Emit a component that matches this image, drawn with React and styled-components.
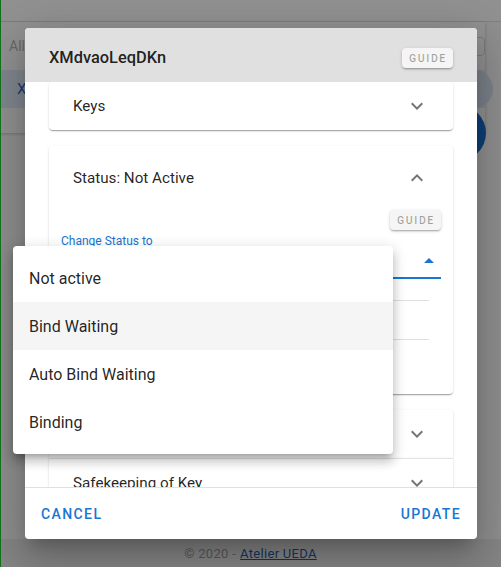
import React from 'react';
import styled, { createGlobalStyle } from 'styled-components';

const GlobalStyle = createGlobalStyle`
  html, body { margin: 0; padding: 0; }
  body {
    width: 501px;
    height: 567px;
    overflow: hidden;
    font-family: Roboto, "Liberation Sans", Arial, sans-serif;
    -webkit-font-smoothing: antialiased;
  }
  *, *::before, *::after { box-sizing: border-box; }
`;

const Screen = styled.div`
  position: relative;
  width: 501px;
  height: 567px;
  overflow: hidden;
  background: #fbfbfb;
  display: flex;
  flex-direction: column;
  &::after {
    content: '';
    position: absolute;
    left: 0;
    top: 0;
    bottom: 0;
    width: 1px;
    background: #13701a;
    z-index: 10;
  }
`;

/* ---------- page behind the dialog ---------- */
const AppBar = styled.header`
  height: 22px;
  flex-shrink: 0;
  background: #ffffff;
  border-bottom: 1px solid #e2e2e2;
`;

const PagePanel = styled.section`
  width: 485px;
  background: #ffffff;
  box-shadow: 0 1px 3px rgba(0, 0, 0, 0.2);
  padding-bottom: 25px;
`;

const FilterRow = styled.div`
  height: 48px;
  display: flex;
  align-items: center;
  justify-content: space-between;
  padding-left: 9px;
  font-size: 14px;
  color: #b9b9b9;
`;

const FilterBox = styled.div`
  width: 44px;
  height: 19px;
  border: 1px solid #d6d6d6;
  border-radius: 4px;
`;

const ListRow = styled.div`
  height: 38px;
  display: flex;
  align-items: center;
  justify-content: space-between;
  padding-left: 17px;
  background: #e3edf9;
  color: #1e6fcf;
  font-size: 15px;
`;

const RowAvatar = styled.div`
  width: 38px;
  height: 38px;
  margin-right: -8px;
  border-radius: 50%;
  background: #d9e5f4;
`;

const Fab = styled.div`
  position: absolute;
  left: 430px;
  top: 105px;
  width: 56px;
  height: 56px;
  border-radius: 50%;
  background: #1a6fd0;
`;

const PageFooter = styled.footer`
  margin-top: auto;
  height: 28px;
  display: flex;
  align-items: center;
  justify-content: center;
  font-size: 13px;
  color: #9c9c9c;
  letter-spacing: 0.3px;
  background: #ececec;
  & a {
    color: #1f5fa8;
    margin-left: 4px;
    text-decoration: underline;
  }
`;

const Backdrop = styled.div`
  position: absolute;
  inset: 0;
  background: rgba(0, 0, 0, 0.43);
`;

/* ---------- dialog ---------- */
const Dialog = styled.div`
  position: absolute;
  left: 25px;
  top: 28px;
  width: 452px;
  height: 511px;
  background: #ffffff;
  border-radius: 4px;
  overflow: hidden;
  display: flex;
  flex-direction: column;
  box-shadow: 0px 11px 15px -7px rgba(0, 0, 0, 0.2),
    0px 24px 38px 3px rgba(0, 0, 0, 0.14),
    0px 9px 46px 8px rgba(0, 0, 0, 0.12);
`;

const DialogHeader = styled.div`
  height: 54px;
  flex-shrink: 0;
  background: #e0e0e0;
  padding: 20px 24px 14px 24px;
  display: flex;
  align-items: center;
  justify-content: space-between;
`;

const Title = styled.h2`
  margin: 0;
  font-size: 16.4px;
  line-height: 20px;
  font-weight: 500;
  color: rgba(0, 0, 0, 0.87);
`;

const GuideButton = styled.button`
  width: 51px;
  height: 20px;
  padding: 0 0 0 1px;
  border: none;
  border-radius: 4px;
  background: #f5f5f5;
  color: rgba(0, 0, 0, 0.34);
  font-family: inherit;
  font-size: 10.5px;
  font-weight: 500;
  letter-spacing: 1.6px;
  box-shadow: 0px 2px 2px -1px rgba(0, 0, 0, 0.2),
    0px 1px 2px 0px rgba(0, 0, 0, 0.14),
    0px 1px 4px 0px rgba(0, 0, 0, 0.1);
`;

const DialogBody = styled.div`
  flex: 1;
  min-height: 0;
  overflow: hidden;
  padding: 0 24px;
  display: flex;
  flex-direction: column;
`;

const Card = styled.div`
  flex-shrink: 0;
  background: #ffffff;
  border-radius: ${(p) => (p.$joinTop ? '0' : '4px')} ${(p) => (p.$joinTop ? '0' : '4px')}
    ${(p) => (p.$joinBottom ? '0' : '4px')} ${(p) => (p.$joinBottom ? '0' : '4px')};
  margin-bottom: ${(p) => (p.$joinBottom ? '0' : '16px')};
  border-top: ${(p) => (p.$joinTop ? '1px solid #e3e3e3' : 'none')};
  box-shadow: 0px 2px 1px -1px rgba(0, 0, 0, 0.2),
    0px 1px 1px 0px rgba(0, 0, 0, 0.14),
    0px 1px 3px 0px rgba(0, 0, 0, 0.12);
`;

const Summary = styled.div`
  height: ${(p) => (p.$expanded ? '64px' : '48px')};
  padding: 0 24px;
  display: flex;
  align-items: center;
  justify-content: space-between;
  font-size: 15.2px;
  color: rgba(0, 0, 0, 0.87);
`;

const IconSvg = styled.svg`
  width: 24px;
  height: 24px;
  flex-shrink: 0;
  fill: ${(p) => p.$color || 'rgba(0,0,0,0.54)'};
`;

const Details = styled.div`
  padding: 0 12px 54px 12px;
  display: flex;
  flex-direction: column;
`;

const GuideRow = styled.div`
  display: flex;
  justify-content: flex-end;
`;

const Field = styled.div`
  margin-top: 4px;
  display: flex;
  flex-direction: column;
`;

const FieldLabel = styled.label`
  font-size: 12px;
  line-height: 14px;
  color: #1976d2;
`;

const SelectInput = styled.div`
  height: 31px;
  display: flex;
  align-items: center;
  justify-content: flex-end;
  padding-bottom: 3px;
  border-bottom: 2px solid #1976d2;
`;

const BlankRow = styled.div`
  height: ${(p) => p.$h}px;
  margin-right: 12px;
  border-bottom: 1px solid #e0e0e0;
`;

const DialogFooter = styled.div`
  flex-shrink: 0;
  height: 52px;
  padding: 8px;
  border-top: 1px solid #e0e0e0;
  display: flex;
  align-items: center;
  justify-content: space-between;
`;

const TextButton = styled.button`
  height: 36px;
  padding: 6px 8px;
  border: none;
  background: transparent;
  color: #1976d2;
  font-family: inherit;
  font-size: 14px;
  font-weight: 500;
  letter-spacing: 1.4px;
  text-transform: uppercase;
`;

/* ---------- dropdown menu ---------- */
const Menu = styled.ul`
  position: absolute;
  left: 13px;
  top: 246px;
  width: 380px;
  margin: 0;
  padding: 8px 0;
  list-style: none;
  background: #ffffff;
  border-radius: 4px;
  box-shadow: 0px 5px 5px -3px rgba(0, 0, 0, 0.2),
    0px 8px 10px 1px rgba(0, 0, 0, 0.14),
    0px 3px 14px 2px rgba(0, 0, 0, 0.12);
`;

const MenuItem = styled.li`
  height: 48px;
  padding: 0 16px;
  display: flex;
  align-items: center;
  font-size: 16px;
  color: rgba(0, 0, 0, 0.87);
  background: ${(p) => (p.$active ? '#f5f5f5' : 'transparent')};
`;

const ExpandMore = () => (
  <IconSvg viewBox="0 0 24 24">
    <path d="M16.59 8.59 12 13.17 7.41 8.59 6 10l6 6 6-6z" />
  </IconSvg>
);

const ExpandLess = () => (
  <IconSvg viewBox="0 0 24 24">
    <path d="M12 8l-6 6 1.41 1.41L12 10.83l4.59 4.58L18 14z" />
  </IconSvg>
);

const ArrowDropUp = () => (
  <IconSvg viewBox="0 0 24 24" $color="#1976d2">
    <path d="M7 14l5-5 5 5z" />
  </IconSvg>
);

const options = ['Not active', 'Bind Waiting', 'Auto Bind Waiting', 'Binding'];

export default function App() {
  return (
    <>
      <GlobalStyle />
      <Screen>
        <AppBar />
        <PagePanel>
          <FilterRow>
            <span>All</span>
            <FilterBox />
          </FilterRow>
          <ListRow>
            <span>XMdvaoLeqDKn</span>
            <RowAvatar />
          </ListRow>
        </PagePanel>
        <Fab />
        <PageFooter>
          © 2020 - <a href="#">Atelier UEDA</a>
        </PageFooter>

        <Backdrop />

        <Dialog>
          <DialogHeader>
            <Title>XMdvaoLeqDKn</Title>
            <GuideButton>GUIDE</GuideButton>
          </DialogHeader>
          <DialogBody>
            <Card>
              <Summary>
                <span>Keys</span>
                <ExpandMore />
              </Summary>
            </Card>
            <Card>
              <Summary $expanded>
                <span>Status: Not Active</span>
                <ExpandLess />
              </Summary>
              <Details>
                <GuideRow>
                  <GuideButton>GUIDE</GuideButton>
                </GuideRow>
                <Field>
                  <FieldLabel>Change Status to</FieldLabel>
                  <SelectInput>
                    <ArrowDropUp />
                  </SelectInput>
                </Field>
                <BlankRow $h={22} />
                <BlankRow $h={39} />
              </Details>
            </Card>
            <Card $joinBottom>
              <Summary>
                <span>Key Information</span>
                <ExpandMore />
              </Summary>
            </Card>
            <Card $joinTop>
              <Summary>
                <span>Safekeeping of Key</span>
                <ExpandMore />
              </Summary>
            </Card>
          </DialogBody>
          <DialogFooter>
            <TextButton>Cancel</TextButton>
            <TextButton>Update</TextButton>
          </DialogFooter>
        </Dialog>

        <Menu>
          {options.map((o) => (
            <MenuItem key={o} $active={o === 'Bind Waiting'}>
              {o}
            </MenuItem>
          ))}
        </Menu>
      </Screen>
    </>
  );
}
